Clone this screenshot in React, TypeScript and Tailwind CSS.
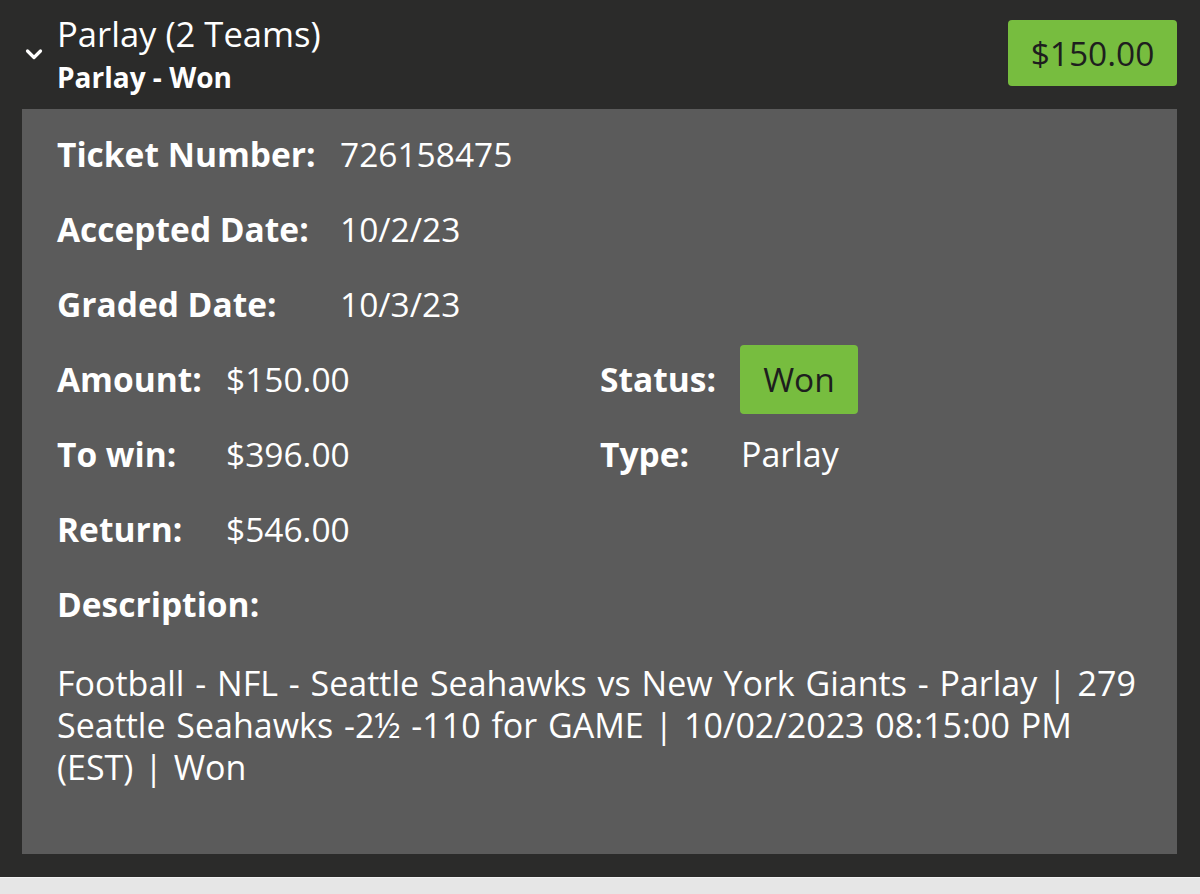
import React from "react";

const font = { fontFamily: '"Open Sans", "Noto Sans", sans-serif' };

function Row({ children }: { children: React.ReactNode }) {
  return <div className="flex h-[75px] items-center">{children}</div>;
}

export default function App() {
  return (
    <div className="flex h-[894px] w-[1200px] flex-col bg-[#2b2b2a] text-white" style={font}>
      <div className="flex h-[109px] items-start justify-between pl-[25px] pr-[23px]">
        <div className="flex items-start">
          <svg width="18" height="13" viewBox="0 0 18 13" className="mt-[48px] mr-[14px]">
            <path d="M2.5 3 L9 9.5 L15.5 3" stroke="white" strokeWidth="3.2" fill="none" strokeLinecap="round" strokeLinejoin="round" />
          </svg>
          <div className="flex flex-col">
            <div className="mt-[14px] text-[34.6px] leading-[40px]">Parlay (2 Teams)</div>
            <div className="mt-[7px] text-[28px] font-bold leading-[32px]">Parlay - Won</div>
          </div>
        </div>
        <div className="mt-[20px] flex h-[66px] w-[169px] items-center justify-center rounded-[4px] bg-[#77bd3f] text-[33.5px] text-[#1e1e1e]">
          $150.00
        </div>
      </div>
      <div className="mx-[22px] flex h-[745px] w-[1155px] flex-col bg-[#5b5b5b] pl-[35px] pr-[30px] pt-[8px] text-[33.5px]">
        <Row>
          <span className="w-[283px] font-bold">Ticket Number:</span>
          <span>726158475</span>
        </Row>
        <Row>
          <span className="w-[283px] font-bold">Accepted Date:</span>
          <span>10/2/23</span>
        </Row>
        <Row>
          <span className="w-[283px] font-bold">Graded Date:</span>
          <span>10/3/23</span>
        </Row>
        <Row>
          <span className="w-[169px] font-bold">Amount:</span>
          <span className="w-[374px]">$150.00</span>
          <span className="w-[140px] font-bold">Status:</span>
          <span className="flex h-[69px] w-[118px] items-center justify-center rounded-[4px] bg-[#77bd3f] text-[#1e1e1e]">
            Won
          </span>
        </Row>
        <Row>
          <span className="w-[169px] font-bold">To win:</span>
          <span className="w-[374px]">$396.00</span>
          <span className="w-[141px] font-bold">Type:</span>
          <span className="text-[34px]">Parlay</span>
        </Row>
        <Row>
          <span className="w-[169px] font-bold">Return:</span>
          <span>$546.00</span>
        </Row>
        <Row>
          <span className="font-bold">Description:</span>
        </Row>
        <p className="mt-[20px] text-[34px] leading-[42px] [word-spacing:2px]">
          Football - NFL - Seattle Seahawks vs New York Giants - Parlay | 279 Seattle Seahawks -2½ -110 for GAME |
          10/02/2023 08:15:00 PM (EST) | Won
        </p>
      </div>
      <div className="h-[23px]" />
      <div className="flex-1 border-t border-[#f3f3f3] bg-[#e6e6e6]" />
    </div>
  );
}
